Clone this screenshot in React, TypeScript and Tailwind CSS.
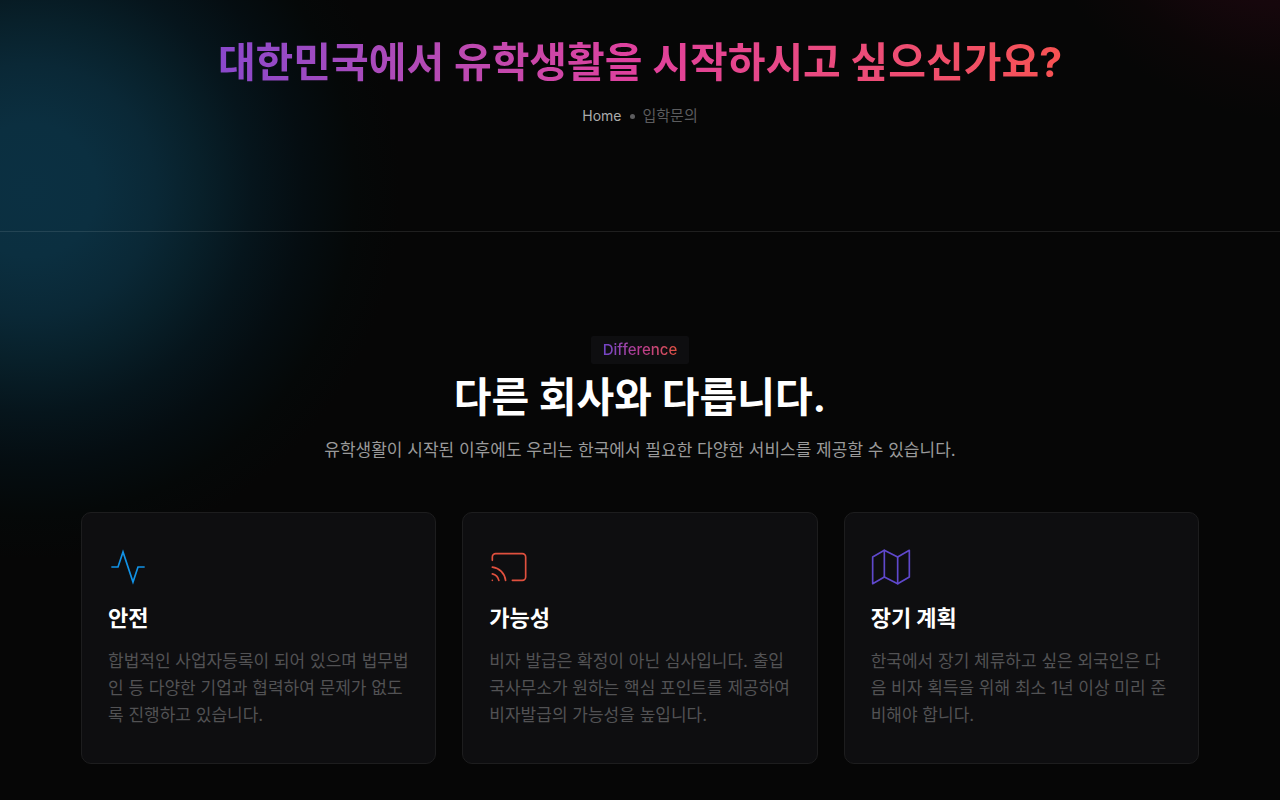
import type { IconType } from "react-icons";
import { FiActivity, FiCast, FiMap } from "react-icons/fi";

type Service = { title: string; text: string; Icon: IconType; color: string };

const services: Service[] = [
  {
    title: "안전",
    text: "합법적인 사업자등록이 되어 있으며 법무법인 등 다양한 기업과 협력하여 문제가 없도록 진행하고 있습니다.",
    Icon: FiActivity,
    color: "text-[#1192e6] [stroke-linecap:butt] [stroke-linejoin:miter]",
  },
  {
    title: "가능성",
    text: "비자 발급은 확정이 아닌 심사입니다. 출입국사무소가 원하는 핵심 포인트를 제공하여 비자발급의 가능성을 높입니다.",
    Icon: FiCast,
    color: "text-[#e0503e]",
  },
  {
    title: "장기 계획",
    text: "한국에서 장기 체류하고 싶은 외국인은 다음 비자 획득을 위해 최소 1년 이상 미리 준비해야 합니다.",
    Icon: FiMap,
    color: "text-[#5f48cc]",
  },
];

function ServiceCard({ title, text, Icon, color }: Service) {
  return (
    <article className="rounded-[10px] border border-[#1d1d1e] bg-[#0e0e10] px-[26px] pt-[34px] pb-[34px]">
      <Icon size={40} strokeWidth={1} className={color} aria-hidden="true" />
      <h3 className="mt-4 text-[22px] leading-[30px] font-bold text-white">{title}</h3>
      <p className="mt-[15px] text-[17px] leading-[27px] break-all text-[#525254]">{text}</p>
    </article>
  );
}

export default function App() {
  return (
    <div className="relative min-h-screen overflow-hidden bg-[#060606] font-['Inter','Noto_Sans_CJK_KR',sans-serif]">
      <div
        aria-hidden="true"
        className="pointer-events-none absolute -top-[180px] -left-[340px] size-[740px] rounded-full bg-[radial-gradient(circle_closest-side,#0b3042_0%,#0b2f40_18%,#0a2836_34%,#08202a_46%,#06151c_60%,#050d11_74%,#050808_88%,#060606_100%)]"
      />
      <div
        aria-hidden="true"
        className="pointer-events-none absolute -top-[400px] -right-[270px] size-[520px] rounded-full bg-[radial-gradient(circle_closest-side,#200812_0%,#16070c_56%,#0b0607_80%,#060606_100%)]"
      />
      <header className="relative flex flex-col items-center border-b border-white/10 px-4 pt-8 pb-[103px]">
        <h1 className="bg-linear-to-r from-[#8a48cc] via-[#e0409c] to-[#f75252] bg-clip-text text-center text-[41px] leading-[60px] font-bold text-transparent">
          대한민국에서 유학생활을 시작하시고 싶으신가요?
        </h1>
        <nav aria-label="Breadcrumb" className="mt-3">
          <ol className="flex items-center gap-2 text-sm leading-6">
            <li>
              <a href="#" className="text-[#acacac]">Home</a>
            </li>
            <li aria-hidden="true" className="size-[5px] rounded-full bg-[#5c5c5e]" />
            <li className="text-[15px] text-[#5c5c5e]">입학문의</li>
          </ol>
        </nav>
      </header>

      <main className="relative mx-auto max-w-[1150px] px-4 pt-[104px] pb-9">
        <div className="flex flex-col items-center text-center">
          <span className="rounded-[2px] bg-[#0e0e10] px-3 py-1 text-[15px] leading-5 font-medium">
            <span className="bg-linear-to-r from-[#7044c8] via-[#b83a90] to-[#e0503e] bg-clip-text text-transparent">
              Difference
            </span>
          </span>
          <h2 className="mt-1 text-[41px] leading-[58px] font-bold text-white">다른 회사와 다릅니다.</h2>
          <p className="mt-2 text-[17px] leading-8 text-[#9a9a9a]">
            유학생활이 시작된 이후에도 우리는 한국에서 필요한 다양한 서비스를 제공할 수 있습니다.
          </p>
        </div>
        <div className="mt-[46px] grid gap-[26px] md:grid-cols-3">
          {services.map((service) => (
            <ServiceCard key={service.title} {...service} />
          ))}
        </div>
      </main>
    </div>
  );
}
